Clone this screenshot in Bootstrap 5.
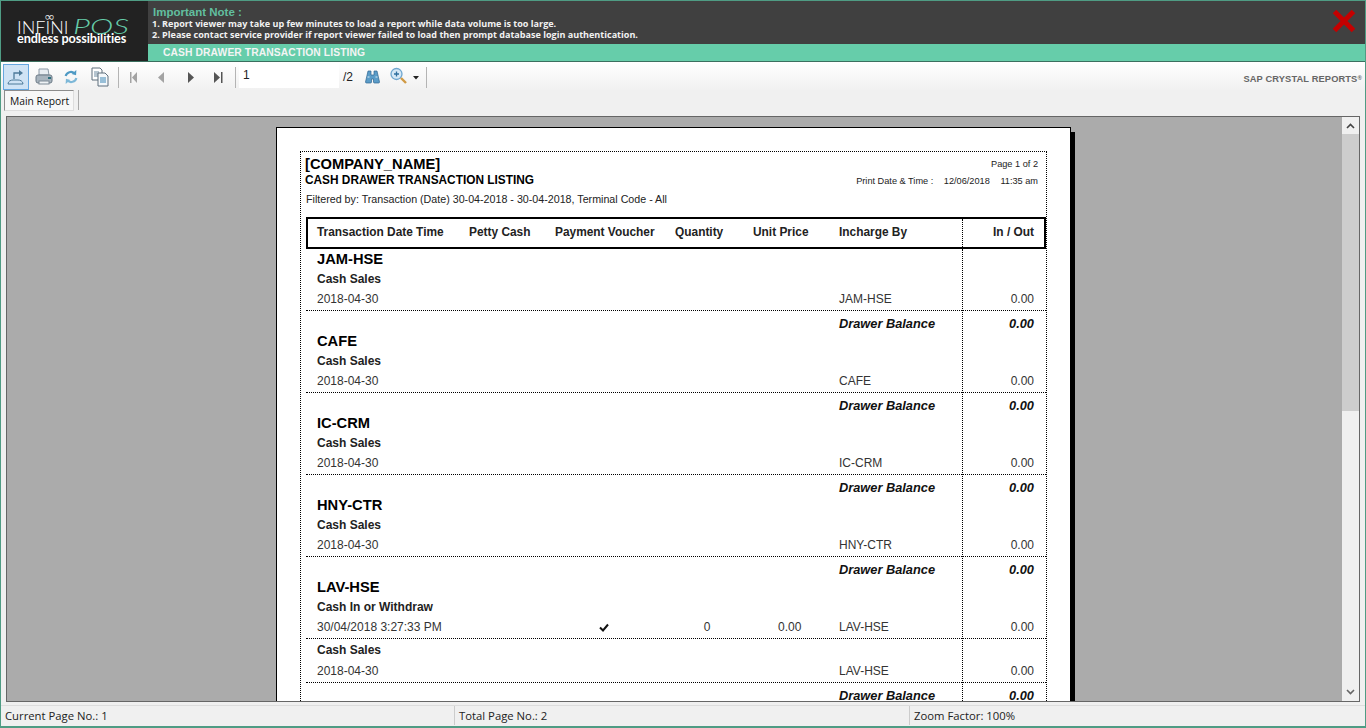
<!DOCTYPE html>
<html lang="en">
<head>
<meta charset="utf-8">
<title>Cash Drawer Transaction Listing</title>
<link href="https://cdn.jsdelivr.net/npm/bootstrap@5.3.0/dist/css/bootstrap.min.css" rel="stylesheet">
<style>
html,body{height:100%;overflow:hidden;margin:0}
body{background:#f0f0f0;font-family:"Liberation Sans",Arial,sans-serif;color:#000}
.app-shell{height:728px;width:1366px;border:1px solid #4f9c84;border-bottom-width:2px;overflow:hidden}
.top-head{height:61px;border-bottom:1px solid #3b6f5f}
.logo-box{width:147px;background:#222;color:#fff;padding-top:12px;white-space:nowrap}
.logo-inf{height:7px;font:400 13px/7px "DejaVu Sans",sans-serif;padding-left:43px;color:#ddd}
.logo-line{height:12px;font-family:"Lato",sans-serif;font-weight:300;font-size:18px;line-height:12px;padding-left:16px}
.logo-pos{display:inline-block;color:#66cdaa;font:italic 300 21px/12px "Lato",sans-serif;margin-left:5px;transform:scaleX(1.5);transform-origin:left center}
.logo-tag{font-family:"Lato",sans-serif;font-size:12.7px;line-height:12px;font-weight:700;padding-left:16px;letter-spacing:-.1px}
.note-box{background:#404040;height:43px;padding:4px 0 0 5px}
.note-title{color:#66cdaa;font:700 11.5px/14px "Liberation Sans",sans-serif;opacity:.9}
.note-text{color:#f2f2f2;font:700 9.05px/10.5px "Open Sans",sans-serif;white-space:nowrap;margin-left:-1px}
.green-strip{background:#66cdaa;height:17px;padding-left:15px;color:#f4f4f4;font:700 10.3px/17px "Liberation Sans",sans-serif;letter-spacing:.1px}
.close-x{position:absolute;right:9px;top:8px}
.tool-bar{height:28px;background:linear-gradient(#fff,#f1f1f1);padding-left:2px}
.tool-btn{width:26px;height:26px;margin-top:2px;display:flex;align-items:center;justify-content:center}
.tool-btn.on{background:#cfe3f5;border:1px solid #66a7e0}
.m-print{margin-left:2px}.m-refresh{margin-left:1px}.m-copy{margin-left:3px}.m-zoom{margin-left:2px}
.tool-sep{width:1px;height:21px;background:#b4b4b4;margin-top:5px}
.sep-a{margin-left:5px;margin-right:0}
.sep-b{margin-left:2px;margin-right:3px}
.sep-c{margin-left:7px}
.nav-btn{width:28.5px;display:flex;align-items:center;justify-content:center;height:26px;margin-top:2px}
.page-box{width:100px;height:25px;background:#fff;margin-top:1px;font:12px/24px "Liberation Sans",sans-serif;padding-left:4px;color:#222}
.page-of{font:12px/31px "Liberation Sans",sans-serif;margin-left:4px;color:#222;width:16px}
.sap-label{font:700 9.3px/34px "Liberation Sans",sans-serif;color:#666;margin-left:auto;margin-right:3px;letter-spacing:.12px}
.sap-label sup{font-size:6px;top:-.3em}
.tab-bar{height:23px;padding-left:3px;background:#f0f0f0}
.tab-item{height:21px;border:1px solid #8c8c8c;border-bottom-color:#ddd;border-right-color:#ddd;background:#f7f7f7;font:10.3px/20px "Open Sans",sans-serif;padding:0 4px 0 5px;color:#111}
.tab-sep{width:1px;height:20px;background:#aaa;margin:0 0 0 4px}
.viewer{height:586px;margin:3px 5px 0 5px;border:1px solid #666;background:#ababab;position:relative;overflow:hidden}
.scroll-rail{position:absolute;right:0;top:0;bottom:0;width:17px;background:#f0f0f0}
.scroll-thumb{position:absolute;left:0;right:0;top:17px;height:277px;background:#cdcdcd}
.scroll-up,.scroll-down{position:absolute;left:4px}
.scroll-up{top:6px}.scroll-down{bottom:6px}
.sheet{position:absolute;left:269px;top:10px;width:795px;height:700px;background:#fff;border:1px solid #000;box-shadow:4px 5px 0 #000}
.frame{margin:23px 0 0 23px;width:747px;height:650px;border:1px dotted #000;border-bottom:0;padding-left:5px}
.rep-top{height:65px;position:relative;padding-top:5px}
.co-name{font:700 14.7px/15px "Liberation Sans",sans-serif;margin-left:-1px}
.rep-title{font:700 11.85px/15px "Liberation Sans",sans-serif;margin:1px 0 0 -1px}
.rep-filter{font:10.7px/13px "Liberation Sans",sans-serif;margin-top:5px;color:#222}
.rep-meta{position:absolute;right:8px;top:4px;text-align:right;font:9.2px/17px "Liberation Sans",sans-serif;color:#222}
.rep-meta span{margin-left:8px}
.col-grid{display:grid;grid-template-columns:11px 152px 86px 120px 78px 86px 123px 1px 1fr;width:740px}
.head-box{border:2px solid #000;height:32px;font:700 11.9px/27px "Liberation Sans",sans-serif;color:#222;width:740px}
.head-box .col-grid{width:736px;grid-template-columns:9px 152px 86px 120px 78px 86px 123px 1px 1fr;height:28px}
.head-box .num-right{padding-right:10px}
.v-dot{border-left:1px dotted #000;height:100%}
.v-line{position:absolute;left:656px;top:0;bottom:0;border-left:1px dotted #000}
.rows-wrap{position:relative;width:740px}
.band{height:20px;display:flex;align-items:center;padding-left:11px}
.band-tall{height:22px}
.g-name{font:700 14.7px/20px "Liberation Sans",sans-serif}
.g-type{font:700 12px/20px "Liberation Sans",sans-serif;color:#222}
.d-row{height:22px;border-bottom:1px dotted #000;font:12px/21px "Liberation Sans",sans-serif;color:#333}
.num-right{text-align:right;padding-right:12px}
.bal-row{height:20px;padding-top:6px;font:italic 700 12.8px/14px "Liberation Sans",sans-serif;color:#111}
.tick-cell{text-align:center;padding-right:23px}
.tick-cell svg{vertical-align:-1px}
.qty-cell{text-align:center;padding-right:14px}
.price-cell{padding-left:25px}
.status-row{height:20px;margin-top:3px;border-top:1px solid #ddd;font:11.3px/20px "Open Sans",sans-serif;color:#222}
.stat-a{width:454px;padding-left:4px;border-right:1px solid #ccc}
.stat-b{width:455px;padding-left:4px;border-right:1px solid #ccc}
.stat-c{padding-left:4px}
</style>
</head>
<body>
<div class="app-shell d-flex flex-column">
  <header class="top-head d-flex position-relative">
    <div class="logo-box flex-shrink-0">
      <div class="logo-inf">∞</div>
      <div class="logo-line">INFINI<span class="logo-pos">POS</span></div>
      <div class="logo-tag">endless possibilities</div>
    </div>
    <div class="flex-grow-1 d-flex flex-column">
      <div class="note-box">
        <div class="note-title">Important Note :</div>
        <div class="note-text">1. Report viewer may take up few minutes to load a report while data volume is too large.</div>
        <div class="note-text">2. Please contact service provider if report viewer failed to load then prompt database login authentication.</div>
      </div>
      <div class="green-strip">CASH DRAWER TRANSACTION LISTING</div>
    </div>
    <svg class="close-x" width="24" height="24" viewBox="0 0 24 24"><path d="M2.500 2.500 21.500 21.500M21.500 2.500 2.500 21.500" stroke="#c40000" stroke-width="5" fill="none"/></svg>
  </header>

  <div class="tool-bar d-flex">
    <div class="tool-btn on"><svg width="20" height="20" viewBox="0 0 20 20" fill="none"><path d="M2 17h15c0-3-3-4-5-4H7c-2 0-5 1-5 4Z" stroke="#4d7a99"/><path d="M8 12V6h6" stroke="#4d7a99" stroke-width="1.300"/><path d="m13 3 4 3-4 3Z" fill="#4d7a99"/></svg></div>
    <div class="tool-btn m-print"><svg width="20" height="20" viewBox="0 0 20 20"><path d="M5 2h9l1 6H5Z" fill="#e8edf2" stroke="#8a98a5"/><rect x="2" y="8" width="16" height="8" rx="2" fill="#a8b4be" stroke="#6d7b87"/><rect x="5" y="14" width="10" height="3" fill="#eef2f5" stroke="#7d8a95"/><rect x="14" y="10" width="3" height="2" fill="#2e6f7d"/></svg></div>
    <div class="tool-btn m-refresh"><svg width="16" height="16" viewBox="0 0 18 18" fill="none"><path d="M3 8a6 6 0 0 1 10-3" stroke="#4f9ac4" stroke-width="2.400"/><path d="m15 1-.3 6-5-1.500Z" fill="#4f9ac4"/><path d="M15 10a6 6 0 0 1-10 3" stroke="#7db8d8" stroke-width="2.400"/><path d="m3 17 .3-6 5 1.500Z" fill="#7db8d8"/></svg></div>
    <div class="tool-btn m-copy"><svg width="18" height="20" viewBox="0 0 18 20"><path d="M1 1h8l2 2v10H1Z" fill="#fff" stroke="#5f6f7d"/><path d="M3 5h5M3 7h5M3 9h5" stroke="#6d8aa0"/><path d="M7 6h7l3 3v10H7Z" fill="#f4f8fb" stroke="#5f6f7d"/><path d="M9 11h6M9 13h6M9 15h6" stroke="#3c86b5"/></svg></div>
    <div class="tool-sep sep-a"></div>
    <div class="nav-btn"><svg width="9" height="11" viewBox="0 0 9 11"><path d="M1 0h1.500v11H1Z" fill="#a3a3a3"/><path d="M8 0v11L3 5.500Z" fill="#a3a3a3"/></svg></div>
    <div class="nav-btn"><svg width="7" height="11" viewBox="0 0 7 11"><path d="M6 0v11L0 5.500Z" fill="#a3a3a3"/></svg></div>
    <div class="nav-btn"><svg width="7" height="11" viewBox="0 0 7 11"><path d="M1 0v11l6-5.500Z" fill="#555"/></svg></div>
    <div class="nav-btn"><svg width="9" height="11" viewBox="0 0 9 11"><path d="M0 0v11l6-5.500Z" fill="#555"/><path d="M7 0h1.500v11H7Z" fill="#555"/></svg></div>
    <div class="tool-sep sep-b"></div>
    <div class="page-box">1</div>
    <div class="page-of">/2</div>
    <div class="tool-btn"><svg width="15" height="14" viewBox="0 0 15 14"><path d="M3 1h3v4h3V1h3l2.500 11a1 1 0 0 1-1 1H9.500a1 1 0 0 1-1-1V9h-2v3a1 1 0 0 1-1 1H1.500a1 1 0 0 1-1-1Z" fill="#5b9cc8" stroke="#2e6590" stroke-width=".7"/><path d="M2.500 7h2M10.500 7h2" stroke="#dcecf7"/></svg></div>
    <div class="tool-btn m-zoom"><svg width="22" height="20" viewBox="0 0 22 20" fill="none"><circle cx="7.500" cy="7" r="5.500" fill="#d5e8f6" stroke="#6ea6cf" stroke-width="1.300"/><path d="M5 7h5M7.500 4.500v5" stroke="#2e6f9f" stroke-width="1.300"/><path d="m12 11 5 5" stroke="#d09a45" stroke-width="2.400"/></svg></div>
    <svg class="align-self-center mt-1" width="6" height="4" viewBox="0 0 6 4"><path d="M0 0h6L3 3.500Z" fill="#222"/></svg>
    <div class="tool-sep sep-c"></div>
    <div class="sap-label">SAP CRYSTAL REPORTS<sup>®</sup></div>
  </div>

  <div class="tab-bar d-flex">
    <div class="tab-item">Main Report</div>
    <div class="tab-sep"></div>
  </div>

  <main class="viewer">
    <div class="sheet">
      <div class="frame">
        <div class="rep-top">
          <div class="co-name">[COMPANY_NAME]</div>
          <div class="rep-title">CASH DRAWER TRANSACTION LISTING</div>
          <div class="rep-filter">Filtered by: Transaction (Date) 30-04-2018 - 30-04-2018, Terminal Code - All</div>
          <div class="rep-meta">
            <div>Page 1 of 2</div>
            <div>Print Date &amp; Time : <span>12/06/2018</span> <span>11:35 am</span></div>
          </div>
        </div>
        <div class="head-box">
          <div class="col-grid">
            <div></div><div>Transaction Date Time</div><div>Petty Cash</div><div>Payment Voucher</div><div>Quantity</div><div>Unit Price</div><div>Incharge By</div><div class="v-dot"></div><div class="num-right">In / Out</div>
          </div>
        </div>
        <div class="rows-wrap">
          <div class="v-line"></div>

          <div class="band g-name">JAM-HSE</div>
          <div class="band g-type">Cash Sales</div>
          <div class="d-row col-grid"><div></div><div>2018-04-30</div><div></div><div></div><div></div><div></div><div>JAM-HSE</div><div></div><div class="num-right">0.00</div></div>
          <div class="bal-row col-grid"><div></div><div></div><div></div><div></div><div></div><div></div><div>Drawer Balance</div><div></div><div class="num-right">0.00</div></div>

          <div class="band g-name">CAFE</div>
          <div class="band g-type">Cash Sales</div>
          <div class="d-row col-grid"><div></div><div>2018-04-30</div><div></div><div></div><div></div><div></div><div>CAFE</div><div></div><div class="num-right">0.00</div></div>
          <div class="bal-row col-grid"><div></div><div></div><div></div><div></div><div></div><div></div><div>Drawer Balance</div><div></div><div class="num-right">0.00</div></div>

          <div class="band g-name">IC-CRM</div>
          <div class="band g-type">Cash Sales</div>
          <div class="d-row col-grid"><div></div><div>2018-04-30</div><div></div><div></div><div></div><div></div><div>IC-CRM</div><div></div><div class="num-right">0.00</div></div>
          <div class="bal-row col-grid"><div></div><div></div><div></div><div></div><div></div><div></div><div>Drawer Balance</div><div></div><div class="num-right">0.00</div></div>

          <div class="band g-name">HNY-CTR</div>
          <div class="band g-type">Cash Sales</div>
          <div class="d-row col-grid"><div></div><div>2018-04-30</div><div></div><div></div><div></div><div></div><div>HNY-CTR</div><div></div><div class="num-right">0.00</div></div>
          <div class="bal-row col-grid"><div></div><div></div><div></div><div></div><div></div><div></div><div>Drawer Balance</div><div></div><div class="num-right">0.00</div></div>

          <div class="band g-name">LAV-HSE</div>
          <div class="band g-type">Cash In or Withdraw</div>
          <div class="d-row col-grid"><div></div><div>30/04/2018 3:27:33 PM</div><div></div><div class="tick-cell"><svg width="10" height="9" viewBox="0 0 10 9" fill="none"><path d="m1 4.500 3 3L9 1.500" stroke="#111" stroke-width="2"/></svg></div><div class="qty-cell">0</div><div class="price-cell">0.00</div><div>LAV-HSE</div><div></div><div class="num-right">0.00</div></div>
          <div class="band band-tall g-type">Cash Sales</div>
          <div class="d-row col-grid"><div></div><div>2018-04-30</div><div></div><div></div><div></div><div></div><div>LAV-HSE</div><div></div><div class="num-right">0.00</div></div>
          <div class="bal-row col-grid"><div></div><div></div><div></div><div></div><div></div><div></div><div>Drawer Balance</div><div></div><div class="num-right">0.00</div></div>
        </div>
      </div>
    </div>
    <div class="scroll-rail">
      <svg class="scroll-up" width="9" height="6" viewBox="0 0 9 6" fill="none"><path d="m1 5 3.500-3.500L8 5" stroke="#444" stroke-width="1.600"/></svg>
      <div class="scroll-thumb"></div>
      <svg class="scroll-down" width="9" height="6" viewBox="0 0 9 6" fill="none"><path d="m1 1 3.500 3.500L8 1" stroke="#666" stroke-width="1.600"/></svg>
    </div>
  </main>

  <footer class="status-row d-flex">
    <div class="stat-a">Current Page No.: 1</div>
    <div class="stat-b">Total Page No.: 2</div>
    <div class="stat-c">Zoom Factor: 100%</div>
  </footer>
</div>
<script src="https://cdn.jsdelivr.net/npm/bootstrap@5.3.0/dist/js/bootstrap.bundle.min.js"></script>
</body>
</html>
